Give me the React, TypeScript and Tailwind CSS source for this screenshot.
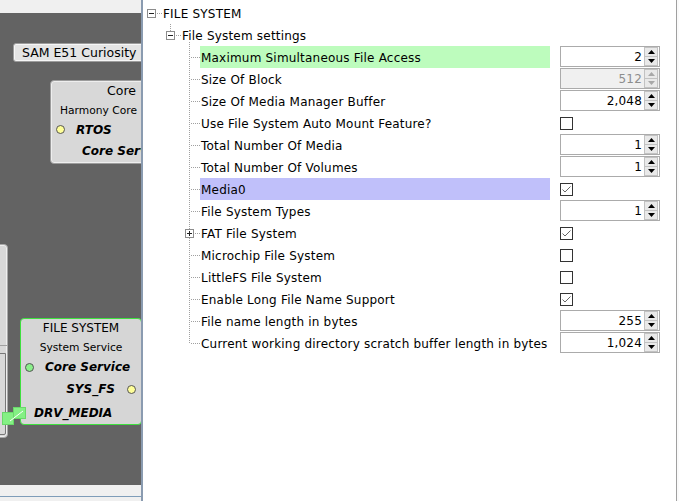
import React from "react";

type R = {
  label: string;
  kind: "spin" | "check";
  value?: string;
  checked?: boolean;
  disabled?: boolean;
  hl?: "green" | "purple";
  plus?: boolean;
  last?: boolean;
};

const rows: R[] = [
  { label: "Maximum Simultaneous File Access", kind: "spin", value: "2", hl: "green" },
  { label: "Size Of Block", kind: "spin", value: "512", disabled: true },
  { label: "Size Of Media Manager Buffer", kind: "spin", value: "2,048" },
  { label: "Use File System Auto Mount Feature?", kind: "check", checked: false },
  { label: "Total Number Of Media", kind: "spin", value: "1" },
  { label: "Total Number Of Volumes", kind: "spin", value: "1" },
  { label: "Media0", kind: "check", checked: true, hl: "purple" },
  { label: "File System Types", kind: "spin", value: "1" },
  { label: "FAT File System", kind: "check", checked: true, plus: true },
  { label: "Microchip File System", kind: "check", checked: false },
  { label: "LittleFS File System", kind: "check", checked: false },
  { label: "Enable Long File Name Support", kind: "check", checked: true },
  { label: "File name length in bytes", kind: "spin", value: "255" },
  {
    label: "Current working directory scratch buffer length in bytes",
    kind: "spin",
    value: "1,024",
    last: true,
  },
];

const DOT = "#a0a0a0";

function Arrow({ up, disabled }: { up: boolean; disabled?: boolean }) {
  return (
    <svg width="7" height="4" viewBox="0 0 7 4">
      <path
        d={up ? "M0 4 L7 4 L3.5 0 Z" : "M0 0 L7 0 L3.5 4 Z"}
        fill={disabled ? "#a8a8a8" : "#000"}
      />
    </svg>
  );
}

function Spinner({ value, disabled }: { value: string; disabled?: boolean }) {
  return (
    <div
      className={`self-start w-[100px] h-[21px] border border-[#ababab] flex items-stretch ${
        disabled ? "bg-[#f0f0f0]" : "bg-white"
      }`}
    >
      <div
        className={`flex-1 text-right pr-[2px] leading-[20px] ${
          disabled ? "text-[#8d8d8d]" : "text-black"
        }`}
      >
        {value}
      </div>
      <div className="w-[15px] flex flex-col pr-[1px]">
        <div className="flex-1 bg-[#e9e9e9] border border-[#c2c2c2] flex items-center justify-center">
          <Arrow up disabled={disabled} />
        </div>
        <div className="flex-1 bg-[#e9e9e9] border border-[#c2c2c2] border-t-0 flex items-center justify-center">
          <Arrow up={false} disabled={disabled} />
        </div>
      </div>
    </div>
  );
}

function Check({ checked }: { checked?: boolean }) {
  return (
    <div className="w-[13px] h-[13px] border border-[#333] bg-white flex items-center justify-center">
      {checked && (
        <svg width="11" height="11" viewBox="0 0 11 11">
          <polyline points="1.5,5.5 4,8 9.5,2.5" fill="none" stroke="#666" strokeWidth="1" />
        </svg>
      )}
    </div>
  );
}

function Gutter({ first, last, plus }: { first?: boolean; last?: boolean; plus?: boolean }) {
  return (
    <svg width="57" height="22" viewBox="0 0 57 22" overflow="visible" className="shrink-0">
      {plus ? (
        <>
          <line x1="46.5" y1="0" x2="46.5" y2="7" stroke={DOT} strokeDasharray="1 1" />
          <line x1="46.5" y1="16" x2="46.5" y2="22" stroke={DOT} strokeDasharray="1 1" />
          <line x1="52" y1="11.5" x2="57" y2="11.5" stroke={DOT} strokeDasharray="1 1" />
          <rect x="42.5" y="7.5" width="8" height="8" fill="#fff" stroke="#8c8c8c" />
          <line x1="44" y1="11.5" x2="49" y2="11.5" stroke="#222" />
          <line x1="46.5" y1="9" x2="46.5" y2="14" stroke="#222" />
        </>
      ) : (
        <>
          <line
            x1="46.5"
            y1={first ? -4 : 0}
            x2="46.5"
            y2={last ? 11.5 : 22}
            stroke={DOT}
            strokeDasharray="1 1"
          />
          <line x1="48" y1="11.5" x2="57" y2="11.5" stroke={DOT} strokeDasharray="1 1" />
        </>
      )}
    </svg>
  );
}

export default function App() {
  return (
    <div
      className="w-[679px] h-[501px] flex overflow-hidden bg-white text-[12px] text-black"
      style={{ fontFamily: '"DejaVu Sans", sans-serif' }}
    >
      {/* Left diagram panel */}
      <div className="w-[141px] h-full relative flex flex-col overflow-hidden shrink-0">
        <div className="h-[13px] bg-[#f0f0f0]" />
        <div className="flex-1 bg-[#636363]" />
        <div className="h-[16px] bg-[#f0f0f0] flex flex-col">
          <div className="h-[11px]" />
          <div className="h-[1px] bg-[#7f9db9]" />
        </div>

        {/* SAM E51 board node */}
        <div className="absolute left-[13px] top-[43px] w-[170px] h-[19px] rounded-[3px] border border-[#9c9c9c] bg-[#e4e4e4] shadow-[inset_0_0_0_1px_#f6f6f6] pl-[8px] leading-[17px] text-[12.5px] whitespace-nowrap">
          SAM E51 Curiosity Nano
        </div>

        {/* Core node */}
        <div className="absolute left-[50px] top-[80px] w-[150px] h-[84px] rounded-[4px] border border-[#9c9c9c] bg-[#d8d8d8] shadow-[inset_0_0_0_1px_#eeeeee] flex flex-col whitespace-nowrap">
          <div className="h-[19px] leading-[19px] pl-[56px] text-[12.5px]">Core</div>
          <div className="h-[21px] leading-[21px] pl-[9px] text-[10.7px]">Harmony Core</div>
          <div className="h-[17px] flex items-center">
            <div className="ml-[5px] w-[9px] h-[9px] rounded-full bg-[#ffff99] border border-[#555]" />
            <div className="ml-[11px] font-bold italic">RTOS</div>
          </div>
          <div className="h-[27px] leading-[27px] pl-[31px] font-bold italic">Core Service</div>
        </div>

        {/* Partial node at left edge */}
        <div className="absolute left-[-12px] top-[244px] w-[20px] h-[194px] rounded-[4px] border border-[#a8a8a8] bg-[#d8d8d8] shadow-[inset_0_0_0_1px_#eeeeee] flex flex-col">
          <div className="h-[100px]" />
          <div className="h-[1px] bg-[#a0a0a0]" />
          <div className="h-[7px]" />
          <div className="w-[17px] h-[82px] border border-[#777] rounded-br-[2px]" />
        </div>

        {/* FILE SYSTEM node */}
        <div className="absolute left-[20px] top-[318px] w-[122px] h-[107px] rounded-[4px] border border-[#3ee03e] bg-[#d6d6d6] flex flex-col whitespace-nowrap">
          <div className="h-[19px] leading-[19px] text-center">FILE SYSTEM</div>
          <div className="h-[20px] leading-[20px] text-center text-[10.7px]">System Service</div>
          <div className="h-[18px] flex items-center">
            <div className="ml-[4px] w-[9px] h-[9px] rounded-full bg-[#8af08a] border border-[#555]" />
            <div className="ml-[11px] font-bold italic">Core Service</div>
          </div>
          <div className="h-[26px] flex items-center justify-end pr-[5px]">
            <div className="font-bold italic">SYS_FS</div>
            <div className="ml-[12px] w-[9px] h-[9px] rounded-full bg-[#ffff99] border border-[#555]" />
          </div>
          <div className="h-[22px] leading-[22px] pl-[13px] font-bold italic">DRV_MEDIA</div>
        </div>

        {/* connection squares */}
        <svg className="absolute left-0 top-[405px]" width="30" height="22" viewBox="0 0 30 22">
          <rect x="13.5" y="2.5" width="12" height="11" fill="#84f084" stroke="#6ad86a" />
          <rect x="2.5" y="7.5" width="11" height="12" fill="#84f084" stroke="#6ad86a" />
          <line x1="10" y1="16" x2="23" y2="6" stroke="#ffffff" strokeWidth="1" />
        </svg>
      </div>

      {/* divider */}
      <div className="w-[2px] h-full bg-[#8a9bb0] shrink-0" />

      {/* Right tree panel */}
      <div className="w-[533px] h-full bg-white pt-[2px] shrink-0 flex flex-col tracking-[0.2px]">
        {/* level 0 */}
        <div className="h-[22px] flex items-center">
          <svg width="20" height="22" viewBox="0 0 20 22" className="shrink-0">
            <rect x="4.5" y="7.5" width="8" height="8" fill="#fff" stroke="#8c8c8c" />
            <line x1="6" y1="11.5" x2="11" y2="11.5" stroke="#222" />
            <line x1="14" y1="11.5" x2="20" y2="11.5" stroke={DOT} strokeDasharray="1 1" />
          </svg>
          <div className="h-[22px] leading-[24px] whitespace-nowrap">FILE SYSTEM</div>
        </div>
        {/* level 1 */}
        <div className="h-[22px] flex items-center">
          <svg width="39" height="22" viewBox="0 0 39 22" className="shrink-0">
            <line x1="27.5" y1="0" x2="27.5" y2="7" stroke={DOT} strokeDasharray="1 1" />
            <rect x="23.5" y="7.5" width="8" height="8" fill="#fff" stroke="#8c8c8c" />
            <line x1="25" y1="11.5" x2="30" y2="11.5" stroke="#222" />
            <line x1="33" y1="11.5" x2="39" y2="11.5" stroke={DOT} strokeDasharray="1 1" />
          </svg>
          <div className="h-[22px] leading-[24px] whitespace-nowrap">File System settings</div>
        </div>
        {/* level 2 */}
        {rows.map((r, i) => (
          <div key={r.label} className="h-[22px] flex items-center">
            <Gutter first={i === 0} last={r.last} plus={r.plus} />
            <div
              className={`w-[350px] h-[22px] shrink-0 pl-[1px] leading-[24px] whitespace-nowrap ${
                r.hl === "green" ? "bg-[#bdfcbd]" : r.hl === "purple" ? "bg-[#c0c0fa]" : ""
              }`}
            >
              {r.label}
            </div>
            <div className="ml-[10px] h-[22px] flex items-center">
              {r.kind === "spin" ? (
                <Spinner value={r.value ?? ""} disabled={r.disabled} />
              ) : (
                <Check checked={r.checked} />
              )}
            </div>
          </div>
        ))}
      </div>
      <div className="w-[1px] h-full bg-[#a0a0a0] shrink-0" />
      <div className="flex-1 h-full bg-[#fafafa]" />
    </div>
  );
}
